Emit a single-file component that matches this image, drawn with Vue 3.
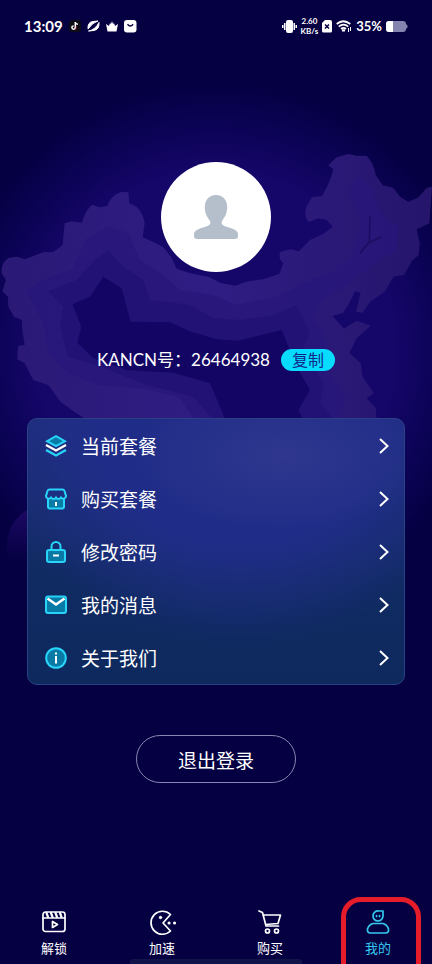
<script setup>
import { ref } from 'vue'

const userId = ref('26464938')
const activeTab = ref('mine')

const menus = [
  { key: 'plan', label: '当前套餐' },
  { key: 'shop', label: '购买套餐' },
  { key: 'password', label: '修改密码' },
  { key: 'message', label: '我的消息' },
  { key: 'about', label: '关于我们' }
]

const tabs = [
  { key: 'unlock', label: '解锁' },
  { key: 'speed', label: '加速' },
  { key: 'buy', label: '购买' },
  { key: 'mine', label: '我的' }
]

const copyId = () => {
  navigator.clipboard?.writeText(userId.value)
}
</script>

<template>
  <div class="page">
    <!-- map background -->
    <svg class="map" viewBox="0 0 1296 1740" aria-hidden="true">
      <defs>
        <linearGradient id="land" x1="0" y1="0" x2="1" y2="0">
          <stop offset="0" stop-color="#2b1976" />
          <stop offset=".5" stop-color="#301d84" />
          <stop offset="1" stop-color="#25156b" />
        </linearGradient>
        <linearGradient id="island" x1="0" y1="0" x2="0" y2="1">
          <stop offset="0" stop-color="#1d0964" />
          <stop offset="1" stop-color="#050043" />
        </linearGradient>
        <clipPath id="border">
          <path d="M5 640 Q2 610 25 594 L50 590 L75 598 L100 588 L130 577 L160 576 L188 556 L194 490 L215 484 L246 488 Q255 455 275 434 L300 442 L322 438 Q330 410 362 396 L385 397 L388 430 L410 440 Q430 460 434 490 L428 532 L465 548 L490 562 L514 592 L530 626 L570 640 L625 650 L660 668 L705 677 L745 664 L790 658 L838 642 L850 610 Q832 592 842 575 L872 568 L897 574 L930 540 L970 522 L998 500 L980 480 L955 475 L927 486 Q910 470 919 440 L936 412 L966 408 Q990 370 1000 328 L985 316 L1010 292 L1045 282 L1070 287 L1100 288 Q1122 310 1127 345 L1148 376 L1180 384 L1200 410 L1225 426 L1255 412 L1280 384 L1296 380 L1288 490 L1250 508 L1259 550 L1256 585 L1236 602 L1212 645 L1180 650 L1154 695 L1110 725 L1088 758 L1068 755 L1082 698 L1065 694 L1050 725 L1030 758 L997 768 L1032 806 L1070 782 L1112 797 L1070 835 L1048 878 L1082 910 L1088 950 L1122 1000 L1100 1015 L1127 1045 L1132 1100 L290 1100 L215 1050 L180 1024 L145 975 L100 960 L74 910 L52 898 L54 858 L74 855 L67 810 L66 780 L42 770 L25 740 L24 710 L7 694 L18 660 Z" />
        </clipPath>
      </defs>
      <g transform="translate(0 180)">
        <g clip-path="url(#border)">
          <rect x="0" y="270" width="1296" height="840" fill="url(#land)" />
          <path fill="#28167a" fill-opacity=".8" d="M78 690 L130 660 L220 625 L260 535 L325 500 L385 520 L420 600 L490 645 L540 690 L640 705 L710 735 L830 710 L910 670 L1000 635 L1060 580 L1085 480 L1045 400 L1070 350 L1110 380 L1150 470 L1195 500 L1190 570 L1110 620 L1020 690 L965 720 L940 780 L985 850 L980 930 L1035 1010 L1010 1100 L600 1100 L535 1010 L420 985 L300 975 L205 940 L145 880 L130 790 Z" />
          <path fill="#221276" d="M145 694 L230 660 L285 600 L325 570 L370 620 L430 660 L450 720 L570 735 L640 775 L720 780 L820 765 L890 735 L930 820 L905 870 L970 970 L960 1030 L1010 1090 L650 1090 L580 1010 L440 975 L290 915 L205 890 L180 800 L190 740 Z" />
          <path fill="#130564" d="M217 733 L270 710 L310 650 L365 685 L392 785 L510 787 L565 812 L650 838 L715 842 L845 810 L890 920 L930 990 L895 1050 L920 1100 L685 1100 L630 970 L520 938 L380 930 L280 895 L232 848 L244 800 Z" />
          <path fill="none" stroke="#1d0d61" stroke-width="5" d="M1110 470 L1108 545 L1080 580 M1108 548 L1145 530" />
        </g>
        <path fill="url(#island)" d="M90 1345 Q22 1380 20 1465 L30 1500 H100 Z" />
      </g>
    </svg>

    <header class="status">
      <div class="status-left">
        <span class="time">13:09</span>
        <svg width="12" height="12" viewBox="0 0 12 12">
          <rect width="12" height="12" rx="3" fill="#0c0b16" />
          <path d="M6.3 2v5.6a1.7 1.7 0 1 1-1.7-1.7M6.3 2.3q.4 1.8 2.6 2" fill="none" stroke="#fff" stroke-width="1.5" />
          <path d="M7.2 6v2.2q-.4 1.4-1.7 1.7" fill="none" stroke="#e53654" stroke-width=".6" />
        </svg>
        <svg width="13" height="12" viewBox="0 0 13 12" fill="none" stroke="#fff">
          <path d="M1 9Q.5 2 6 1.5L11 1Q6 2 1 9z" fill="#fff" />
          <path d="M12 2.5q.5 7-5 8l-5.500 .5Q8 10 12 2.500z" fill="#fff" />
        </svg>
        <svg width="12" height="11" viewBox="0 0 12 11">
          <path d="M0 3l3 2 1-3 1 1 1-3 1 3 1-1 1 3 3-2-1.500 7.500h-9z" fill="#fff" />
        </svg>
        <svg width="13" height="13" viewBox="0 0 13 13">
          <rect width="12.500" height="12.500" rx="3" fill="#fff" />
          <path d="M3.500 4.200q2.800 3.600 5.600 0" fill="none" stroke="#050043" stroke-width="1.400" />
        </svg>
      </div>
      <div class="status-right">
        <svg width="15" height="13" viewBox="0 0 15 13" fill="#fff">
          <rect x="4" y="0" width="7" height="13" rx="2" />
          <path d="M2 3h1.500v7H2zM0 5h1.500v3H0zM11.500 3H13v7h-1.500zM13.500 5H15v3h-1.500z" />
        </svg>
        <span class="speed"><b>2.60</b><b>KB/s</b></span>
        <svg width="10" height="13" viewBox="0 0 10 13">
          <path d="M3 0h5q2 0 2 2v9q0 1.500-1.500 1.500h-7Q0 12.500 0 11V3z" fill="#fff" />
          <path d="M3 4.500l4 4M7 4.500l-4 4" stroke="#050043" stroke-width="1.500" />
        </svg>
        <svg width="16" height="13" viewBox="0 0 16 13" fill="none" stroke="#fff" stroke-width="1.700">
          <path d="M.7 4q6.500-5.500 13.600 0M2.800 6.600q4.700-4 9.400 0M5 9q2.500-2.200 5 0" />
          <path d="M7.500 9.300v2.200" stroke-width="3" />
          <path d="M12.500 8v4M14.500 7v4" stroke-width="1" />
        </svg>
        <span class="percent">35%</span>
        <svg width="22" height="11" viewBox="0 0 22 11">
          <path d="M3 0h14q3 0 3 3l1.500 1.500v2L20 8q0 3-3 3H3Q0 11 0 8V3q0-3 3-3z" fill="#8583b0" />
          <path d="M3 0h4v11H3Q0 11 0 8V3q0-3 3-3z" fill="#fff" />
        </svg>
      </div>
    </header>

    <main class="main">
      <div class="avatar">
        <svg width="44" height="44" viewBox="0 0 44 44">
          <path fill="#b5bfcb" d="M22 0c-7 0-11.200 5-11.200 12 0 6 2.200 10 5 13.500q1.600 3.500-1.300 5C9 33 0 34 0 39v2q0 3 3 3h38q3 0 3-3v-2c0-5-9-6-14.500-8.500q-2.900-1.500-1.300-5c2.800-3.500 5-7.500 5-13.500 0-7-4.200-12-11.200-12z" />
        </svg>
      </div>

      <div class="account">
        <p>KANCN号：{{ userId }}</p>
        <button class="copy" @click="copyId">复制</button>
      </div>

      <nav class="card">
        <a v-for="item in menus" :key="item.key" class="row" :href="'#' + item.key">
          <svg class="row-icon" viewBox="0 0 22 22" fill="none" stroke="#28d4f8" stroke-width="2">
            <g v-if="item.key === 'plan'">
              <path d="M11 1.200L20 6.200 11 11.200 2 6.200z" fill="#087aa5" />
              <path d="M1 10l10 5.500L21 10" stroke="#fff" stroke-width="2.300" />
              <path d="M1 15l10 5.500L21 15" stroke-width="2.300" />
            </g>
            <g v-else-if="item.key === 'shop'">
              <path d="M3 9.500v9q0 2 2 2h12q2 0 2-2v-9z" fill="#087aa5" />
              <path d="M4.500 1.500h13q1.500 0 2 1.500l1.500 5c0 2-3 4-5 1.500-1.500 2-3.800 2-5 0-1.200 2-3.500 2-5 0C4 12 1 10 1 8l1.500-5q.5-1.500 2-1.500z" fill="#1d2f80" />
              <path d="M11 14v4" stroke="#fff" />
            </g>
            <g v-else-if="item.key === 'password'">
              <path d="M6.500 9V5.500a4.500 4.500 0 0 1 9 0V9" />
              <rect x="2" y="9" width="18" height="12" rx="2" fill="#087aa5" />
              <path d="M8 14.500h6" stroke="#fff" />
            </g>
            <g v-else-if="item.key === 'message'">
              <rect x="1" y="2.500" width="20" height="16.500" rx="2" fill="#087aa5" />
              <path d="M2.500 4.500L11 10.500l8.500-6" stroke="#fff" stroke-width="2.500" />
            </g>
            <g v-else>
              <circle cx="11" cy="11" r="9.800" fill="#087aa5" />
              <path d="M11 5.500v2M11 9v7.500" stroke="#fff" />
            </g>
          </svg>
          <span>{{ item.label }}</span>
          <svg class="arrow" width="10" height="16" viewBox="0 0 10 16" fill="none" stroke="#fff" stroke-width="2">
            <path d="M1 1l7.500 7L1 15" />
          </svg>
        </a>
      </nav>

      <button class="logout">退出登录</button>
    </main>

    <nav class="tabs">
      <button
        v-for="tab in tabs"
        :key="tab.key"
        :class="{ tab: true, active: activeTab === tab.key }"
        @click="activeTab = tab.key">
        <svg class="tab-icon" viewBox="0 0 28 26" fill="none" stroke="currentColor" stroke-width="1.700" stroke-linecap="round" stroke-linejoin="round">
          <g v-if="tab.key === 'unlock'">
            <rect x="3" y="3" width="22" height="19.500" rx="2.500" />
            <path d="M3 9h22" />
            <path d="M6.500 4l1.500 4M11 4l1.500 4M15.500 4l1.500 4M20 4l1.500 4" stroke-width="2.200" />
            <path d="M12.500 12.500v6l5-3z" />
          </g>
          <g v-else-if="tab.key === 'speed'">
            <path d="M22.500 5.500A11.500 11.500 0 1 0 22.500 22L15 14z" />
            <circle cx="12.500" cy="8.500" r="1.200" fill="currentColor" stroke-width="1" />
            <path d="M21 14h.1M26.500 14h.1" stroke-width="3" />
          </g>
          <g v-else-if="tab.key === 'buy'">
            <path d="M3 2l3.500 1.500L10 17h12.500M7 6h17.500l-2.500 8.500-12.500 1" />
            <circle cx="11.500" cy="22" r="2" />
            <circle cx="20.500" cy="22" r="2" />
          </g>
          <g v-else>
            <path d="M14.500 2H19v5a5 5 0 1 1-4.500-5z" />
            <path d="M12.500 6.500v1M15.500 6.500v1" />
            <path d="M9 14.500h10q4 1 5.500 5.500.5 4-3 4h-15q-3.500 0-3-4Q5 15.500 9 14.500z" />
          </g>
        </svg>
        <span>{{ tab.label }}</span>
      </button>
      <i class="marker"></i>
      <i class="home-bar"></i>
    </nav>
  </div>
</template>

<style>
body {
  margin: 0;
  background: #040042;
}
</style>

<style scoped>
.page {
  position: relative;
  display: flex;
  flex-direction: column;
  min-height: 100vh;
  overflow: hidden;
  color: #fff;
  font-family: "Noto Sans CJK SC", "Noto Sans", sans-serif;
  background: radial-gradient(ellipse 270px 270px at 50% 350px, #150669 0%, #150669 66%, #0c0357 82%, #040042 100%) #040042;
}
button {
  padding: 0;
  border: none;
  background: none;
  color: inherit;
  font-family: inherit;
  cursor: pointer;
}
p {
  margin: 0;
}
svg {
  display: block;
  flex: none;
}
.map {
  position: absolute;
  top: 0;
  left: 0;
  width: 100%;
}

/* status bar */
.status {
  position: relative;
  display: flex;
  justify-content: space-between;
  align-items: center;
  height: 52px;
  padding: 0 24px;
}
.status-left,
.status-right {
  display: flex;
  align-items: center;
  gap: 6px;
}
.status-right {
  gap: 4px;
}
.time {
  font-family: Lato, sans-serif;
  font-size: 15px;
  font-weight: 700;
}
.percent {
  font-family: Lato, sans-serif;
  font-size: 13px;
  font-weight: 700;
}
.speed {
  display: flex;
  flex-direction: column;
  align-items: center;
  font-family: Lato, sans-serif;
  font-size: 8px;
  line-height: 10px;
}

/* profile */
.main {
  position: relative;
  display: flex;
  flex-direction: column;
  align-items: center;
  padding: 110px 27px 0;
}
.avatar {
  display: flex;
  justify-content: center;
  align-items: center;
  width: 110px;
  height: 110px;
  border-radius: 50%;
  background: #fff;
}
.account {
  display: flex;
  align-items: center;
  gap: 11px;
  margin-top: 74px;
  font-family: Lato, "Noto Sans CJK SC", sans-serif;
  font-size: 17px;
  line-height: 28px;
}
.copy {
  width: 54px;
  height: 22px;
  border-radius: 11px;
  background: #08dcfd;
  color: #12268a;
  font-size: 16px;
  line-height: 22px;
}
.card {
  align-self: stretch;
  margin-top: 44px;
  border: 1px solid #2b4183;
  border-radius: 10px;
  background:
    radial-gradient(ellipse 150px 75px at 68% 14%, #363c90aa 0%, #363c9000 100%),
    radial-gradient(ellipse 260px 220px at 56% 2%, #202d88 55%, #202d8800 100%),
    linear-gradient(#1e2f7a, #102b61 60%, #0d295e);
}
.row {
  display: flex;
  align-items: center;
  gap: 14px;
  height: 53px;
  padding: 0 15px 0 17px;
  color: #fff;
  font-size: 19px;
  text-decoration: none;
}
.row-icon {
  width: 22px;
  height: 22px;
}
.arrow {
  margin-left: auto;
}
.logout {
  width: 160px;
  height: 48px;
  margin-top: 50px;
  border: 1px solid #8886b2;
  border-radius: 24px;
  font-size: 19px;
}

/* bottom tabs */
.tabs {
  position: relative;
  display: flex;
  margin-top: auto;
  padding-bottom: 6px;
}
.tab {
  display: flex;
  flex: 1;
  flex-direction: column;
  align-items: center;
  gap: 3px;
  font-size: 13px;
  line-height: 20px;
}
.tab.active {
  color: #35c9ee;
}
.tab-icon {
  width: 28px;
  height: 26px;
  overflow: visible;
}
.marker {
  position: absolute;
  top: -12px;
  right: 11px;
  width: 70px;
  height: 90px;
  border: 5px solid #e61c2a;
  border-radius: 20px;
}
.home-bar {
  position: absolute;
  bottom: 0;
  left: 30%;
  right: 30%;
  height: 5px;
  border-radius: 3px 3px 0 0;
  background: #111448;
}
</style>
